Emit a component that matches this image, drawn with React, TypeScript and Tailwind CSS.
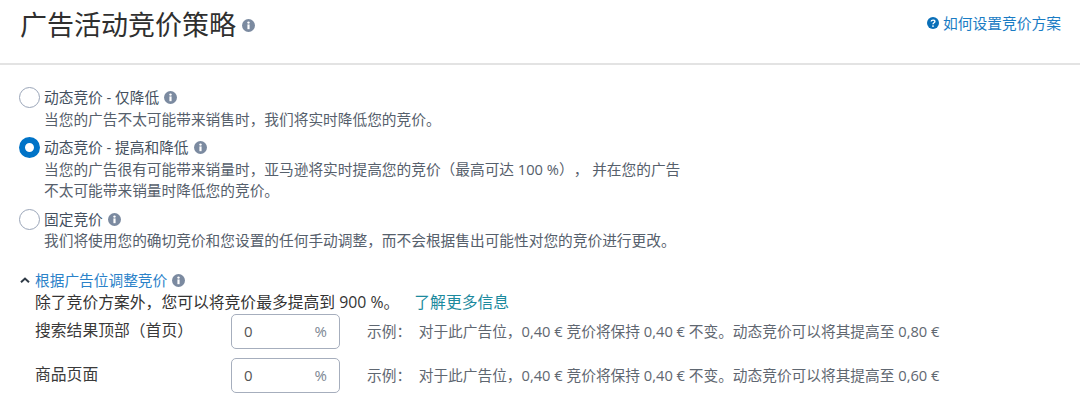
const InfoIcon = ({ className }: { className: string }) => (
  <svg viewBox="0 0 12 12" className={className}>
    <circle cx="6" cy="6" r="6" fill="#7b8aa0" />
    <rect x="5" y="5" width="2" height="4.4" fill="#fff" />
    <circle cx="6" cy="3.3" r="1.1" fill="#fff" />
  </svg>
);

const HelpIcon = () => (
  <svg viewBox="0 0 12 12" className="h-[12px] w-[12px] shrink-0">
    <circle cx="6" cy="6" r="6" fill="#0a6fb8" />
    <path d="M4.2 4.6 C4.2 2.6 7.9 2.6 7.9 4.5 C7.9 5.8 6 5.7 6 7.2" fill="none" stroke="#fff" strokeWidth="1.4" />
    <circle cx="6" cy="9.1" r="0.9" fill="#fff" />
  </svg>
);

const options = [
  {
    label: "动态竞价 - 仅降低",
    lines: ["当您的广告不太可能带来销售时，我们将实时降低您的竞价。"],
    selected: false,
  },
  {
    label: "动态竞价 - 提高和降低",
    lines: [
      "当您的广告很有可能带来销量时，亚马逊将实时提高您的竞价（最高可达 100 %）， 并在您的广告",
      "不太可能带来销量时降低您的竞价。",
    ],
    selected: true,
  },
  {
    label: "固定竞价",
    lines: ["我们将使用您的确切竞价和您设置的任何手动调整，而不会根据售出可能性对您的竞价进行更改。"],
    selected: false,
  },
];

const placements = [
  { name: "搜索结果顶部（首页）", example: "示例：  对于此广告位，0,40 € 竞价将保持 0,40 € 不变。动态竞价可以将其提高至 0,80 €" },
  { name: "商品页面", example: "示例：  对于此广告位，0,40 € 竞价将保持 0,40 € 不变。动态竞价可以将其提高至 0,60 €" },
];

export default function App() {
  return (
    <div className="h-[408px] w-[1080px] overflow-hidden bg-white font-['Open_Sans','Noto_Sans_CJK_SC',sans-serif] text-[14.7px] text-[#3f4a55] [text-spacing-trim:space-all]">
      {/* Header */}
      <div className="flex h-[65px] items-start justify-between border-b-2 border-[#e3e3e3] pl-5 pr-[19px]">
        <div className="mt-[7px] flex items-center gap-[6px]">
          <h1 className="text-[27px] leading-[36px] font-normal text-[#2f2f2f]">广告活动竞价策略</h1>
          <InfoIcon className="h-[13px] w-[13px]" />
        </div>
        <a className="mt-[13px] flex items-center gap-[4px] text-[14.75px] leading-[20px] text-[#1a7cc4]">
          <HelpIcon />
          如何设置竞价方案
        </a>
      </div>

      {/* Strategy options */}
      <div className="mt-[22px] flex flex-col gap-[7px] pl-[19px]">
        {options.map((option) => (
          <div key={option.label} className="flex gap-[4px]">
            <div
              className={
                option.selected
                  ? "h-[21px] w-[21px] shrink-0 rounded-full border-[6px] border-[#0073c7] bg-white"
                  : "h-[21px] w-[21px] shrink-0 rounded-full border border-[#9aa5b8] bg-white"
              }
            />
            <div className="leading-[21.5px]">
              <div className="flex items-center gap-[5px] text-[#434f5e]">
                {option.label}
                <InfoIcon className="h-[13px] w-[13px]" />
              </div>
              {option.lines.map((line) => (
                <div key={line} className="text-[#56606c]">{line}</div>
              ))}
            </div>
          </div>
        ))}
      </div>

      {/* Placement adjustments */}
      <div className="mt-[18px] pl-5">
        <div className="flex items-center gap-[5px] leading-[21px]">
          <svg viewBox="0 0 10 6" className="h-[6px] w-[10px]">
            <path d="M1 5.2 L5 1.5 L9 5.2" fill="none" stroke="#2f3a46" strokeWidth="2" />
          </svg>
          <span className="text-[#2b82c9]">根据广告位调整竞价</span>
          <InfoIcon className="h-[13px] w-[13px]" />
        </div>
        <div className="pl-[15px]">
          <div className="flex text-[15.8px] leading-[22px] text-[#333]">
            除了竞价方案外，您可以将竞价最多提高到 900 %。
            <a className="ml-[15px] text-[#1c8a9e]">了解更多信息</a>
          </div>
          <div className="mt-[1px] flex flex-col gap-[9px]">
            {placements.map((placement) => (
              <div key={placement.name} className="flex items-center">
                <div className="w-[196px] text-[15.8px] text-[#3a3a3a]">{placement.name}</div>
                <div className="flex h-[35px] w-[109px] items-center justify-between rounded-[5px] border border-[#a6aebd] px-[12px] text-[15px] text-[#555]">
                  <span>0</span>
                  <span className="text-[#7d8794]">%</span>
                </div>
                <div className="ml-[27px] whitespace-pre text-[14.7px] text-[#5f6771]">{placement.example}</div>
              </div>
            ))}
          </div>
        </div>
      </div>
    </div>
  );
}
